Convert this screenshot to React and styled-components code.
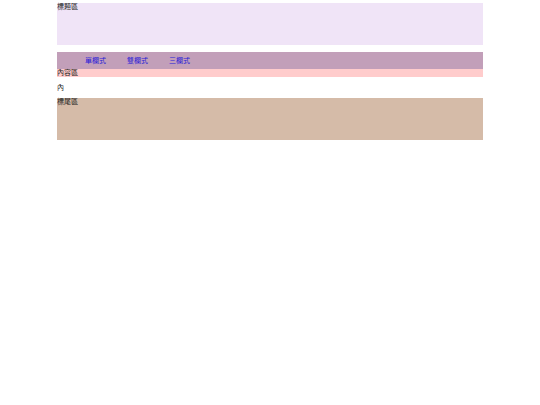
import styled, { createGlobalStyle } from 'styled-components';

const GlobalStyle = createGlobalStyle`
    body {
        margin: 0;
        background: #fff;
        font-family: "Noto Sans CJK TC", "Liberation Sans", sans-serif;
        font-size: 7px;
        line-height: 7px;
        color: #222;
    }
`

export default function App() {
    return (
        <>
            <GlobalStyle />
            <Wrapper>
                <Header>標題區</Header>
                <Nav>
                    <NavLink href="#">單欄式</NavLink>
                    <NavLink href="#">雙欄式</NavLink>
                    <NavLink href="#">三欄式</NavLink>
                </Nav>
                <Content>內容區</Content>
                <Paragraph>內</Paragraph>
                <Footer>標尾區</Footer>
            </Wrapper>
        </>
    )
};

const Wrapper = styled.div`
    width: 426px;
    margin: 3px auto 0;
`
const Header = styled.div`
    height: 42px;
    background-color: #f0e4f7;
`
const Nav = styled.nav`
    display: flex;
    align-items: center;
    gap: 21px;
    height: 16px;
    margin-top: 7px;
    padding-left: 28px;
    padding-bottom: 1px;
    background-color: #c29fb9;
`
const NavLink = styled.a`
    color: #2a1ad8;
    text-decoration: none;
`
const Content = styled.div`
    height: 8px;
    background-color: #ffcccc;
`
const Paragraph = styled.p`
    margin: 7px 0 7px;
`
const Footer = styled.div`
    height: 42px;
    background-color: #d5bba8;
`
